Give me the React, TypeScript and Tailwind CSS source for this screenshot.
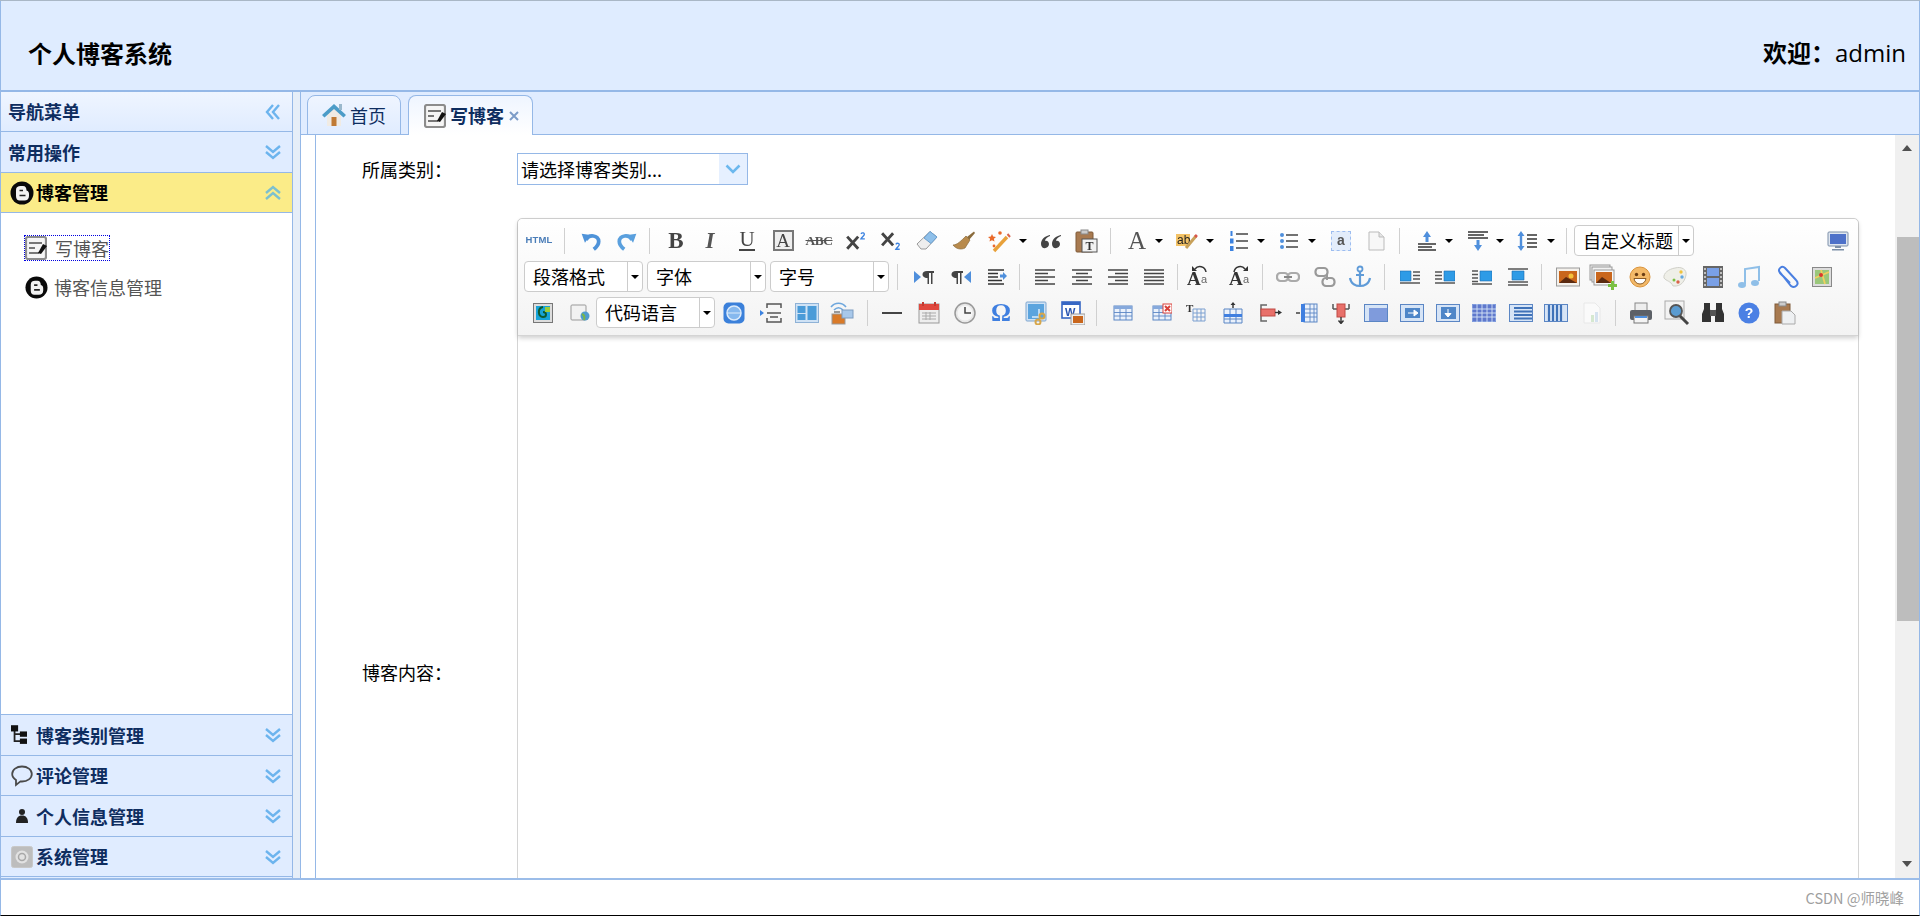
import React from 'react';

const serif = "font-['Liberation_Serif',serif]";

const TableIcon = ({ children, stroke = '#5b86c4' }: { children?: React.ReactNode; stroke?: string }) => (
  <svg viewBox="0 0 20 20" className="h-5 w-5">
    <rect x="1" y="3" width="18" height="14" fill="#eaf1fb" stroke={stroke} />
    <rect x="1" y="3" width="18" height="3" fill="#86a9dc" />
    <path d="M1 9.500H19M1 13H19M7 6V17M13 6V17" stroke={stroke} strokeWidth="0.9" fill="none" />
    {children}
  </svg>
);

const Lines = ({ d }: { d: string }) => (
  <svg viewBox="0 0 20 20" className="h-5 w-5">
    <path d={d} stroke="#444" strokeWidth="1.5" fill="none" />
  </svg>
);

const ImgLines = ({ d, box }: { d: string; box: string }) => (
  <svg viewBox="0 0 20 20" className="h-5 w-5">
    <path d={d} stroke="#555" strokeWidth="1.3" fill="none" />
    <path d={box} fill="#2e9be6" stroke="#1c6cb0" strokeWidth="0.6" />
  </svg>
);

const icons: Record<string, React.ReactNode> = {
  html: <span className="font-['Liberation_Sans',sans-serif] text-[9.5px] font-bold tracking-[0.2px] text-[#4a7db8]">HTML</span>,
  undo: (
    <svg viewBox="0 0 20 20" className="h-[22px] w-[22px]">
      <path d="M5.500 9C8 3.500 17 4.500 17 10.500C17 14 14.500 16 12.500 17.500" stroke="#4f93d9" strokeWidth="3.400" fill="none" />
      <path d="M1.500 3.500L9.500 4.500L4.500 11.500Z" fill="#4f93d9" />
    </svg>
  ),
  redo: (
    <svg viewBox="0 0 20 20" className="h-[22px] w-[22px]">
      <path d="M14.500 9C12 3.500 3 4.500 3 10.500C3 14 5.500 16 7.500 17.500" stroke="#5aa0de" strokeWidth="3.400" fill="none" />
      <path d="M18.500 3.500L10.500 4.500L15.500 11.500Z" fill="#5aa0de" />
    </svg>
  ),
  b: <span className={`${serif} text-[23px] leading-none font-bold text-[#444]`}>B</span>,
  i: <span className={`${serif} text-[23px] leading-none font-bold text-[#555] italic`}>I</span>,
  u: <span className={`${serif} border-b-2 border-[#444] text-[21px] leading-[19px] text-[#444]`}>U</span>,
  abox: <span className={`${serif} flex h-[21px] w-[21px] items-center justify-center border-2 border-[#777] bg-[#eee] text-[19px] leading-none text-[#444]`}>A</span>,
  abc: <span className={`${serif} text-[13.5px] leading-none font-bold tracking-[-0.5px] text-[#555] line-through`}>ABC</span>,
  sup: (
    <svg viewBox="0 0 20 20" className="h-[22px] w-[22px]">
      <path d="M2 6L12 17M12 6L2 17" stroke="#444" strokeWidth="2.600" />
      <path d="M14.500 3.500c1-1.600 3.500-1 3 .8-.3 1-2 2-3 3.700h3.500" stroke="#3b82e0" strokeWidth="1.200" fill="none" />
    </svg>
  ),
  sub: (
    <svg viewBox="0 0 20 20" className="h-[22px] w-[22px]">
      <path d="M1 3L11 14M11 3L1 14" stroke="#444" strokeWidth="2.600" />
      <path d="M13.500 13c1-1.600 3.500-1 3 .8-.3 1-2 2-3 3.700h3.500" stroke="#3b82e0" strokeWidth="1.200" fill="none" />
    </svg>
  ),
  eraser: (
    <svg viewBox="0 0 24 24" className="h-6 w-6">
      <path d="M15 2.500L22 8L11 20H6L2 15Z" fill="#eee" stroke="#999" />
      <path d="M15 2.500L22 8L16 14.500L9 9Z" fill="#8fc0ea" stroke="#6a9fd0" />
    </svg>
  ),
  brush: (
    <svg viewBox="0 0 24 24" className="h-6 w-6">
      <path d="M15 8L22 2.500L23 4L17 11Z" fill="#8a6b3c" />
      <path d="M14 7L18 11L13 19C9 21 4 20 1 16C5 16 9 12 14 7Z" fill="#b88a4c" stroke="#8a6b3c" strokeWidth="0.7" />
    </svg>
  ),
  wand: (
    <svg viewBox="0 0 24 24" className="h-6 w-6">
      <path d="M7 22L20 8" stroke="#e8a13a" strokeWidth="3.400" />
      <path d="M20.500 5L23 8" stroke="#d9634a" strokeWidth="2" />
      <path d="M5 5l1.200 2.600 2.800.3-2.100 1.900.6 2.800L5 11.200 2.500 12.600l.6-2.800L1 7.900l2.800-.3Z" fill="#ea6a2b" />
      <circle cx="13" cy="4" r="1.800" fill="#ea6a2b" />
      <circle cx="7" cy="17" r="1.400" fill="#ea6a2b" />
    </svg>
  ),
  quote: (
    <svg viewBox="0 0 24 24" className="h-6 w-6">
      <path d="M11 6C6 7 2 10 2 15c0 6 8 5 8 0 0-3-3-4-4-3 0-2 2-4 5-5Z" fill="#444" />
      <path d="M22 6c-5 1-9 4-9 9 0 6 8 5 8 0 0-3-3-4-4-3 0-2 2-4 5-5Z" fill="#444" />
    </svg>
  ),
  pasteT: (
    <svg viewBox="0 0 24 24" className="h-6 w-6">
      <rect x="2" y="3" width="17" height="20" rx="1" fill="#a87a50" stroke="#7f5a38" />
      <rect x="7" y="1" width="7" height="4" fill="#ccc" stroke="#888" />
      <rect x="8" y="10" width="15" height="13" fill="#f2f2f2" stroke="#555" />
      <text x="15.500" y="21" textAnchor="middle" fontSize="12" fontWeight="700" fontFamily="Liberation Serif" fill="#333">T</text>
    </svg>
  ),
  fontA: <span className={`${serif} text-[25px] leading-none text-[#555]`}>A</span>,
  ab: (
    <svg viewBox="0 0 22 20" className="h-5 w-[24px]">
      <rect x="0" y="3" width="14" height="12" fill="#f3c266" />
      <text x="1" y="13" fontSize="12" fontFamily="Liberation Sans" fill="#222">ab</text>
      <path d="M10 17L20 5" stroke="#c8a15a" strokeWidth="3" />
      <path d="M19 4l2 2" stroke="#d9534a" strokeWidth="2.500" />
    </svg>
  ),
  ol: (
    <svg viewBox="0 0 20 22" className="h-[22px] w-5">
      <path d="M7 4H19M7 11H19M7 18H19" stroke="#444" strokeWidth="1.400" />
      <rect x="1.500" y="1" width="2" height="5" fill="#3b82e0" />
      <rect x="1" y="8.500" width="3.500" height="5" fill="#3b82e0" />
      <rect x="1" y="16" width="3.500" height="5" fill="#3b82e0" />
    </svg>
  ),
  ul: (
    <svg viewBox="0 0 20 20" className="h-5 w-5">
      <path d="M7 4H19M7 10H19M7 16H19" stroke="#444" strokeWidth="1.400" />
      <circle cx="3" cy="4" r="2" fill="#4f8fdc" />
      <circle cx="3" cy="10" r="2" fill="#4f8fdc" />
      <circle cx="3" cy="16" r="2" fill="#4f8fdc" />
    </svg>
  ),
  selA: (
    <span className="flex h-5 w-5 items-center justify-center border border-dashed border-[#9dbdf0] bg-[#e3edfb] font-['Liberation_Sans',sans-serif] text-[14px] font-bold text-[#555]">a</span>
  ),
  page: (
    <svg viewBox="0 0 20 20" className="h-5 w-5">
      <path d="M3 1H13L18 6V19H3Z" fill="#f7f7f7" stroke="#bbb" />
      <path d="M13 1V6H18" fill="#e5e5e5" stroke="#bbb" />
    </svg>
  ),
  rowBefore: (
    <svg viewBox="0 0 22 22" className="h-[22px] w-[22px]">
      <path d="M11 1L15 7H12.500V12H9.500V7H7Z" fill="#4f8fdc" />
      <path d="M2 14H20M2 17H16M2 20H20" stroke="#333" strokeWidth="1.600" />
    </svg>
  ),
  rowAfter: (
    <svg viewBox="0 0 22 22" className="h-[22px] w-[22px]">
      <path d="M1 2H21M1 5H17M1 8H21" stroke="#333" strokeWidth="1.500" />
      <path d="M11 21L15 15H12.500V10H9.500V15H7Z" fill="#4f8fdc" />
    </svg>
  ),
  lineH: (
    <svg viewBox="0 0 22 22" className="h-[22px] w-[22px]">
      <path d="M5 1L8.500 6H6.200V16H8.500L5 21L1.500 16H3.800V6H1.500Z" fill="#4f8fdc" />
      <path d="M11 5H21M11 9H21M11 13H21M11 17H21" stroke="#333" strokeWidth="1.500" />
    </svg>
  ),
  monitor: (
    <svg viewBox="0 0 22 20" className="h-5 w-[22px]">
      <rect x="1" y="1" width="20" height="14" rx="1" fill="#dfe6f0" stroke="#7d8fa8" />
      <rect x="3" y="3" width="16" height="10" fill="#4e71c9" />
      <path d="M8 15H14V17H8ZM5 18H17V19.500H5Z" fill="#7d8fa8" />
    </svg>
  ),
  ltr: (
    <svg viewBox="0 0 22 20" className="h-5 w-[22px]">
      <path d="M1 4L8 10L1 16Z" fill="#4f8fdc" />
      <path d="M14 4H21V6H19.500V17H18V6H16V17H14.500V11C11 11 9.500 9 9.500 7.500C9.500 5.500 11 4 14 4Z" fill="#444" />
    </svg>
  ),
  rtl: (
    <svg viewBox="0 0 22 20" className="h-5 w-[22px]">
      <path d="M21 4L14 10L21 16Z" fill="#4f8fdc" />
      <path d="M6 4H13V6H11.500V17H10V6H8V17H6.500V11C3 11 1.500 9 1.500 7.500C1.500 5.500 3 4 6 4Z" fill="#444" />
    </svg>
  ),
  indent: (
    <svg viewBox="0 0 20 20" className="h-5 w-5">
      <path d="M1 3H17M1 6.500H11M1 10H11M1 13.500H15M1 17H17" stroke="#333" strokeWidth="1.500" />
      <path d="M13 7.500H16V5L20 9L16 13V10.500H13Z" fill="#4f8fdc" />
    </svg>
  ),
  alignL: <Lines d="M0 3H20M0 6.500H13M0 10H20M0 13.500H13M0 17H20" />,
  alignC: <Lines d="M0 3H20M4 6.500H16M0 10H20M4 13.500H16M0 17H20" />,
  alignR: <Lines d="M0 3H20M7 6.500H20M0 10H20M7 13.500H20M0 17H20" />,
  alignJ: <Lines d="M0 3H20M0 6.500H20M0 10H20M0 13.500H20M0 17H20" />,
  aUndo: (
    <svg viewBox="0 0 26 27" className="h-[27px] w-[26px]">
      <text x="1" y="22" fontSize="19" fontWeight="700" fontFamily="Liberation Serif" fill="#333">A</text>
      <text x="15" y="20" fontSize="11" fontFamily="Liberation Sans" fill="#666">a</text>
      <path d="M9 6C12 2 19 3 20 9" stroke="#333" strokeWidth="1.500" fill="none" />
      <path d="M6 3L11 8H6Z" fill="#333" />
    </svg>
  ),
  aRedo: (
    <svg viewBox="0 0 26 27" className="h-[27px] w-[26px]">
      <text x="1" y="22" fontSize="19" fontWeight="700" fontFamily="Liberation Serif" fill="#333">A</text>
      <text x="15" y="20" fontSize="11" fontFamily="Liberation Sans" fill="#666">a</text>
      <path d="M6 9C7 3 14 2 17 6" stroke="#333" strokeWidth="1.500" fill="none" />
      <path d="M20 3L15 8H20Z" fill="#333" />
    </svg>
  ),
  link: (
    <svg viewBox="0 0 24 20" className="h-5 w-6">
      <rect x="1" y="6" width="11" height="8" rx="3.500" fill="none" stroke="#aaa" strokeWidth="2.200" />
      <rect x="12" y="6" width="11" height="8" rx="3.500" fill="none" stroke="#aaa" strokeWidth="2.200" />
      <path d="M8 10H16" stroke="#888" strokeWidth="2" />
    </svg>
  ),
  unlink: (
    <svg viewBox="0 0 22 22" className="h-[22px] w-[22px]">
      <rect x="1.500" y="2" width="12" height="8" rx="3.500" fill="none" stroke="#999" strokeWidth="2.200" />
      <rect x="8.500" y="12" width="12" height="8" rx="3.500" fill="none" stroke="#999" strokeWidth="2.200" />
      <path d="M13 8V14" stroke="#999" strokeWidth="2" />
    </svg>
  ),
  anchor: (
    <svg viewBox="0 0 24 24" className="h-6 w-6">
      <circle cx="12" cy="4" r="2.500" fill="none" stroke="#5f9bd8" strokeWidth="1.800" />
      <path d="M12 6.500V21M8 10H16M2 13C3 19 8 21 12 21C16 21 21 19 22 13" stroke="#5f9bd8" strokeWidth="2.200" fill="none" />
    </svg>
  ),
  imgL: <ImgLines box="M0 4H11V14H0Z" d="M13 5H20M13 8.500H20M13 12H20M0 16H20" />,
  imgR: <ImgLines box="M9 4H20V14H9Z" d="M0 5H7M0 8.500H7M0 12H7M0 16H20" />,
  imgN: <ImgLines box="M8 4H20V14H8Z" d="M0 4H6M0 7.500H6M0 11H6M0 14.500H6M0 17H20" />,
  imgC: <ImgLines box="M4 4H16V13H4Z" d="M0 2H20M0 15H20M0 18H20" />,
  image: (
    <svg viewBox="0 0 24 20" className="h-5 w-6">
      <rect x="0.500" y="1" width="23" height="18" fill="#f4f1ec" stroke="#999" />
      <rect x="3" y="4" width="18" height="12" fill="#c9661c" />
      <circle cx="15" cy="9" r="2.500" fill="#f5c23c" />
      <path d="M3 16L10 10L21 16Z" fill="#5a2a10" />
    </svg>
  ),
  multi: (
    <svg viewBox="0 0 28 26" className="h-[26px] w-7">
      <rect x="1" y="1" width="20" height="15" fill="#eee" stroke="#999" />
      <rect x="3" y="3" width="20" height="15" fill="#f2f2f2" stroke="#999" />
      <rect x="5" y="6" width="20" height="15" fill="#f7f7f7" stroke="#999" />
      <rect x="7" y="8" width="16" height="11" fill="#c9661c" />
      <path d="M7 19L13 13L22 19Z" fill="#5a2a10" />
      <path d="M19 20H22V17H25V20H28V23H25V26H22V23H19Z" fill="#7bc043" />
    </svg>
  ),
  emoji: (
    <svg viewBox="0 0 22 22" className="h-[22px] w-[22px]">
      <circle cx="11" cy="11" r="10" fill="#f3b968" stroke="#d9933c" />
      <circle cx="7.500" cy="8.500" r="1.700" fill="#6b3d14" />
      <circle cx="14.500" cy="8.500" r="1.700" fill="#6b3d14" />
      <path d="M5 12.500H17C16.500 16 14 18 11 18C8 18 5.500 16 5 12.500Z" fill="#fff" stroke="#8a5a24" />
    </svg>
  ),
  palette: (
    <svg viewBox="0 0 24 22" className="h-[22px] w-6">
      <path d="M12 2C19 0 24 4 23 9C22 14 19 21 10 20C8 15 3 15 1 12C0 7 6 3 12 2Z" fill="#efefe8" stroke="#cfcfc8" />
      <circle cx="18" cy="6" r="1.700" fill="#f0c33c" />
      <circle cx="19" cy="11" r="1.700" fill="#63a8e0" />
      <circle cx="15" cy="16" r="1.700" fill="#d9634a" />
      <circle cx="11" cy="14" r="1.500" fill="#7bc043" />
    </svg>
  ),
  film: (
    <svg viewBox="0 0 20 24" className="h-6 w-5">
      <rect x="0" y="1" width="20" height="22" fill="#666" />
      <rect x="4" y="3" width="12" height="8" fill="#7aa0e6" />
      <rect x="4" y="13" width="12" height="8" fill="#7aa0e6" />
      <path d="M2 3V21M18 3V21" stroke="#ddd" strokeWidth="1.500" strokeDasharray="2 2" />
    </svg>
  ),
  music: (
    <svg viewBox="0 0 24 24" className="h-6 w-6">
      <path d="M8 19V4L22 2V16" stroke="#8fbfe8" strokeWidth="2" fill="none" />
      <ellipse cx="5" cy="20" rx="4" ry="3" fill="#8fbfe8" />
      <ellipse cx="18" cy="18" rx="4" ry="3" fill="#8fbfe8" />
    </svg>
  ),
  clip: (
    <svg viewBox="0 0 24 24" className="h-6 w-6">
      <path d="M4 6L16 21C20 24 25 19 21 15L10 3C7 0 2 4 5 8L15 18" stroke="#4a7fe0" strokeWidth="2" fill="none" />
    </svg>
  ),
  map: (
    <svg viewBox="0 0 20 20" className="h-5 w-5">
      <rect x="0.500" y="0.500" width="19" height="19" fill="#ddd" stroke="#888" />
      <rect x="3" y="3" width="14" height="14" fill="#9ac77a" />
      <path d="M3 11L17 5M9 3L13 17" stroke="#f0d060" strokeWidth="1.800" />
      <circle cx="9" cy="8" r="2" fill="#d83a2e" />
    </svg>
  ),
  tpl: (
    <svg viewBox="0 0 20 20" className="h-5 w-5">
      <rect x="0.500" y="0.500" width="19" height="19" fill="#ddd" stroke="#777" />
      <rect x="3" y="3" width="14" height="14" fill="#16a3d8" />
      <path d="M10 4C4 5 5 14 10 14C14 14 14 9 10 9" stroke="#0d5a2e" strokeWidth="2" fill="none" />
      <rect x="12" y="4" width="5" height="5" fill="#9acb3c" />
    </svg>
  ),
  webpage: (
    <svg viewBox="0 0 20 20" className="h-5 w-5">
      <rect x="1" y="2" width="15" height="15" rx="1" fill="#f2f2f2" stroke="#999" />
      <circle cx="15" cy="13" r="4.500" fill="#4f9bcf" />
      <path d="M12 11C14 12 15 14 14 17" stroke="#7ab648" strokeWidth="2" fill="none" />
    </svg>
  ),
  safari: (
    <svg viewBox="0 0 22 22" className="h-[22px] w-[22px]">
      <rect x="0.500" y="0.500" width="21" height="21" rx="5" fill="#3b80da" />
      <circle cx="11" cy="11" r="7" fill="#86b8ee" stroke="#dcebfb" strokeWidth="1.500" />
      <path d="M4 11H18" stroke="#dcebfb" strokeWidth="1" />
    </svg>
  ),
  pagebreak: (
    <svg viewBox="0 0 22 22" className="h-[22px] w-[22px]">
      <path d="M0 8L4 11L0 14Z" fill="#3b82e0" />
      <path d="M7 6V2H21V6M7 11H21M7 16V20H21V16M10 15H18" stroke="#555" strokeWidth="1.500" fill="none" />
    </svg>
  ),
  layout: (
    <svg viewBox="0 0 24 20" className="h-5 w-6">
      <rect x="0.500" y="0.500" width="23" height="19" fill="#cfe2f5" stroke="#8fb2d6" />
      <rect x="2.500" y="3" width="8" height="7" fill="#4a9bd8" />
      <rect x="2.500" y="11" width="8" height="6" fill="#4a9bd8" />
      <rect x="12.500" y="3" width="9" height="14" fill="#4a9bd8" />
    </svg>
  ),
  wifi: (
    <svg viewBox="0 0 24 24" className="h-6 w-6">
      <path d="M1 6C5 1 12 1 16 6M4 9C7 6 10 6 13 9" stroke="#6ea7dd" strokeWidth="1.600" fill="none" />
      <rect x="2" y="13" width="13" height="10" fill="#d97a28" stroke="#999" />
      <rect x="12" y="9" width="11" height="8" fill="#a8c8ea" stroke="#7c9cc0" />
      <path d="M4 11H10" stroke="#999" strokeWidth="2" />
    </svg>
  ),
  hr: <span className="h-[2px] w-5 bg-[#444]" />,
  calendar: (
    <svg viewBox="0 0 22 22" className="h-[22px] w-[22px]">
      <rect x="1" y="2" width="20" height="19" fill="#eee" stroke="#999" />
      <rect x="1" y="2" width="20" height="6" fill="#e0483e" />
      <path d="M5 0V4M17 0V4" stroke="#c23a30" strokeWidth="2" />
      <path d="M4 11H18M4 14H18M4 17H18M8 10V18M12 10V18" stroke="#aaa" strokeWidth="1" />
    </svg>
  ),
  clock: (
    <svg viewBox="0 0 22 22" className="h-[22px] w-[22px]">
      <circle cx="11" cy="11" r="10" fill="#e8e8e8" stroke="#999" strokeWidth="1.500" />
      <circle cx="11" cy="11" r="7.500" fill="#f7f7f7" />
      <path d="M11 5V11H17" stroke="#444" strokeWidth="1.500" fill="none" />
    </svg>
  ),
  omega: <span className={`${serif} text-[25px] leading-none font-bold text-[#3f7fe0]`}>Ω</span>,
  scissor: (
    <svg viewBox="0 0 24 24" className="h-6 w-6">
      <rect x="1" y="1" width="20" height="19" rx="1" fill="#cfe2f5" stroke="#7fa6cf" />
      <rect x="3" y="3" width="16" height="15" fill="#5ba4de" />
      <path d="M7 16H14V8" stroke="#dcebfb" strokeWidth="1.500" fill="none" />
      <circle cx="17" cy="15" r="2.500" fill="none" stroke="#d6a64a" strokeWidth="2" />
      <circle cx="13" cy="21" r="2.500" fill="none" stroke="#d6a64a" strokeWidth="2" />
    </svg>
  ),
  word: (
    <svg viewBox="0 0 24 24" className="h-6 w-6">
      <rect x="1" y="1" width="18" height="16" fill="#fff" stroke="#3767c4" strokeWidth="1.600" />
      <rect x="1" y="1" width="18" height="3" fill="#3767c4" />
      <text x="4" y="15" fontSize="11" fontWeight="700" fontFamily="Liberation Sans" fill="#2a55b0">W</text>
      <rect x="10" y="13" width="14" height="11" fill="#eee" stroke="#999" />
      <rect x="12" y="15" width="10" height="7" fill="#c9661c" />
    </svg>
  ),
  table: <TableIcon />,
  tableDel: (
    <TableIcon>
      <rect x="11" y="1" width="9" height="9" fill="#fff" stroke="#d9403a" />
      <path d="M13 3L18 8M18 3L13 8" stroke="#d9403a" strokeWidth="2" />
    </TableIcon>
  ),
  tableT: (
    <svg viewBox="0 0 20 20" className="h-5 w-5">
      <text x="0" y="9" fontSize="11" fontWeight="700" fontFamily="Liberation Serif" fill="#333">T</text>
      <path d="M7 6H19V18H7ZM7 10H19M7 14H19M11 6V18M15 6V18" stroke="#7a9fd0" strokeWidth="1" fill="none" />
    </svg>
  ),
  insRow: (
    <svg viewBox="0 0 20 22" className="h-[22px] w-5">
      <path d="M10 0L12.500 3H10.700V6H9.300V3H7.500Z" fill="#333" />
      <path d="M1 7H19V21H1ZM7 7V21M13 7V21M1 17H19" stroke="#5b86c4" fill="#eaf1fb" />
      <rect x="1" y="12" width="18" height="3" fill="#3f7fe0" />
    </svg>
  ),
  delCol: (
    <svg viewBox="0 0 22 20" className="h-5 w-[22px]">
      <path d="M7 2H1V18H7" stroke="#666" strokeWidth="1.500" fill="none" />
      <rect x="1" y="6" width="14" height="7" fill="#e8706a" stroke="#c04a44" />
      <path d="M15 9.500H20" stroke="#333" strokeWidth="1.400" />
      <path d="M22 9.500L18 7V12Z" fill="#333" />
    </svg>
  ),
  insCol: (
    <svg viewBox="0 0 22 20" className="h-5 w-[22px]">
      <path d="M0 10H4" stroke="#333" strokeWidth="1.400" />
      <rect x="8" y="1" width="13" height="18" fill="#eaf1fb" stroke="#5b86c4" />
      <path d="M14 1V19M18 1V19M8 6H21M8 10H21M8 14H21" stroke="#5b86c4" strokeWidth="0.900" />
      <rect x="5" y="1" width="4" height="18" fill="#3f7fe0" />
    </svg>
  ),
  delRow: (
    <svg viewBox="0 0 20 22" className="h-[22px] w-5">
      <path d="M2 7V2M18 7V2M2 7H18" stroke="#555" strokeWidth="1.500" fill="none" />
      <rect x="6" y="2" width="8" height="13" fill="#e8706a" stroke="#c04a44" />
      <path d="M10 15V21M7.500 18.500L10 21.500L12.500 18.500" stroke="#333" strokeWidth="1.400" fill="none" />
    </svg>
  ),
  merge: (
    <svg viewBox="0 0 24 20" className="h-5 w-6">
      <rect x="0.500" y="1.500" width="23" height="17" fill="#d6e4f6" stroke="#5b86c4" />
      <rect x="5" y="5" width="18" height="13" fill="#7f9bdc" />
    </svg>
  ),
  mergeR: (
    <svg viewBox="0 0 24 20" className="h-5 w-6">
      <rect x="0.500" y="1.500" width="23" height="17" fill="#d6e4f6" stroke="#5b86c4" />
      <rect x="5" y="5" width="15" height="10" fill="#4f86c8" />
      <path d="M8 10H14M14 7L18 10L14 13Z" stroke="#fff" fill="#fff" />
    </svg>
  ),
  mergeD: (
    <svg viewBox="0 0 24 20" className="h-5 w-6">
      <rect x="0.500" y="1.500" width="23" height="17" fill="#d6e4f6" stroke="#5b86c4" />
      <rect x="5" y="4" width="15" height="12" fill="#4f86c8" />
      <path d="M12 6V11M9 10.500L12 14L15 10.500Z" stroke="#fff" fill="#fff" />
    </svg>
  ),
  grid: (
    <svg viewBox="0 0 24 20" className="h-5 w-6">
      <rect x="0.500" y="1.500" width="23" height="17" fill="#5f78cc" stroke="#7f9bdc" />
      <path d="M0 6H24M0 10H24M0 14H24M5 1V19M10 1V19M15 1V19M20 1V19" stroke="#d6e4f6" strokeWidth="0.900" />
    </svg>
  ),
  rows: (
    <svg viewBox="0 0 24 20" className="h-5 w-6">
      <rect x="0.500" y="1.500" width="23" height="17" fill="#d6e4f6" stroke="#5b86c4" />
      <path d="M5 5H23M5 8.500H23M5 12H23M5 15.500H23" stroke="#3f72b8" strokeWidth="2" />
    </svg>
  ),
  cols: (
    <svg viewBox="0 0 24 20" className="h-5 w-6">
      <rect x="0.500" y="1.500" width="23" height="17" fill="#d6e4f6" stroke="#5b86c4" />
      <path d="M5 2V18M9 2V18M13 2V18M17 2V18" stroke="#3f72b8" strokeWidth="2.200" />
    </svg>
  ),
  disabled: (
    <svg viewBox="0 0 20 22" className="h-[22px] w-5">
      <path d="M2 1H13L18 6V21H2Z" fill="#fafafa" stroke="#e8e8e8" />
      <rect x="9" y="13" width="3" height="7" fill="#d5e8d0" />
      <rect x="13" y="10" width="3" height="10" fill="#d5e2ef" />
    </svg>
  ),
  print: (
    <svg viewBox="0 0 24 24" className="h-6 w-6">
      <rect x="6" y="2" width="12" height="8" fill="#eee" stroke="#888" />
      <rect x="1" y="9" width="22" height="10" rx="2" fill="#5c6066" />
      <rect x="5" y="15" width="14" height="7" fill="#f4f4f4" stroke="#777" />
      <rect x="6" y="15" width="12" height="2" fill="#4f8fdc" />
    </svg>
  ),
  search: (
    <svg viewBox="0 0 26 26" className="h-[26px] w-[26px]">
      <rect x="1" y="1" width="19" height="18" fill="#f2f2f2" stroke="#aaa" />
      <circle cx="12" cy="11" r="6" fill="#5a9bd0" stroke="#555" strokeWidth="1.800" />
      <path d="M16 16L24 24" stroke="#444" strokeWidth="3" />
    </svg>
  ),
  binoc: (
    <svg viewBox="0 0 24 24" className="h-6 w-6">
      <path d="M3 2H9V8L10 13V21H1V13L3 8ZM15 2H21V8L23 13V21H14V13L15 8Z" fill="#333" />
      <rect x="9" y="9" width="6" height="6" fill="#555" />
    </svg>
  ),
  help: (
    <svg viewBox="0 0 22 22" className="h-[22px] w-[22px]">
      <circle cx="11" cy="11" r="10.500" fill="#4b80e4" />
      <text x="11" y="16" textAnchor="middle" fontSize="14" fontWeight="700" fontFamily="Liberation Sans" fill="#fff">?</text>
    </svg>
  ),
  pasteDoc: (
    <svg viewBox="0 0 22 24" className="h-6 w-[22px]">
      <rect x="1" y="3" width="15" height="19" fill="#a87a50" stroke="#7f5a38" />
      <rect x="5" y="1" width="7" height="4" fill="#ccc" stroke="#888" />
      <path d="M8 10H17L21 14V23H8Z" fill="#eef0f2" stroke="#aaa" />
    </svg>
  ),
};

const T = ({ n, c = 'ml-[16px]' }: { n: string; c?: string }) => (
  <span className={`flex h-[31px] w-5 shrink-0 items-center justify-center blur-[0.3px] [&>*]:shrink-0 ${c}`}>{icons[n]}</span>
);

const Arrow = ({ c = 'ml-[8px]' }: { c?: string }) => (
  <span className={`flex h-[31px] w-2 shrink-0 items-center justify-center ${c}`}>
    <span className="h-0 w-0 border-x-4 border-t-4 border-x-transparent border-t-black" />
  </span>
);

const Sep = ({ c }: { c: string }) => <span className={`h-[26px] w-px shrink-0 bg-[#d0d0d0] ${c}`} />;

const Sel = ({ label, c = 'w-[119px]' }: { label: string; c?: string }) => (
  <span className={`flex h-[31px] shrink-0 rounded-[4px] border border-[#cccccc] bg-white text-[18px] leading-[29px] text-black ${c}`}>
    <span className="flex-1 pl-[8px]">{label}</span>
    <span className="flex w-[15px] items-center justify-center border-l border-[#cccccc]">
      <span className="h-0 w-0 border-x-4 border-t-4 border-x-transparent border-t-black" />
    </span>
  </span>
);

const Toolbar = () => (
  <div className="flex flex-col gap-[5px] rounded-t-[5px] border-b border-[#d4d4d4] bg-gradient-to-b from-white to-[#f3f3f3] pt-[6px] pr-[10px] pb-[7px] pl-[6px] shadow-[0_2px_5px_rgba(0,0,0,0.2)]">
    <div className="flex h-[31px] items-center">
      <span className="ml-[2px] flex h-[31px] w-[26px] shrink-0 items-center justify-center blur-[0.3px]">{icons.html}</span>
      <Sep c="ml-[12px]" />
      <T n="undo" />
      <T n="redo" />
      <Sep c="ml-[12px]" />
      <T n="b" />
      <T n="i" c="ml-[14px]" />
      <T n="u" c="ml-[17px]" />
      <T n="abox" />
      <T n="abc" />
      <T n="sup" c="ml-[17px]" />
      <T n="sub" />
      <T n="eraser" c="ml-[15px]" />
      <T n="brush" c="ml-[17px]" />
      <T n="wand" c="ml-[15px]" />
      <Arrow c="ml-[10px]" />
      <T n="quote" c="ml-[14px]" />
      <T n="pasteT" c="ml-[15px]" />
      <Sep c="ml-[14px]" />
      <T n="fontA" />
      <Arrow />
      <T n="ab" c="ml-[14px]" />
      <Arrow c="ml-[9px]" />
      <T n="ol" c="ml-[15px]" />
      <Arrow />
      <T n="ul" c="ml-[14px]" />
      <Arrow c="ml-[9px]" />
      <T n="selA" c="ml-[15px]" />
      <T n="page" c="ml-[15px]" />
      <Sep c="ml-[13px]" />
      <T n="rowBefore" c="ml-[17px]" />
      <Arrow />
      <T n="rowAfter" c="ml-[15px]" />
      <Arrow />
      <T n="lineH" c="ml-[13px]" />
      <Arrow c="ml-[10px]" />
      <Sep c="ml-[11px]" />
      <Sel label="自定义标题" c="ml-[7px] w-[120px]" />
      <T n="monitor" c="ml-auto" />
    </div>
    <div className="flex h-[31px] items-center">
      <Sel label="段落格式" />
      <Sel label="字体" c="ml-[4px] w-[119px]" />
      <Sel label="字号" c="ml-[4px] w-[119px]" />
      <Sep c="ml-[8px]" />
      <T n="ltr" />
      <T n="rtl" c="ml-[17px]" />
      <T n="indent" />
      <Sep c="ml-[12px]" />
      <T n="alignL" c="ml-[15px]" />
      <T n="alignC" c="ml-[17px]" />
      <T n="alignR" />
      <T n="alignJ" />
      <Sep c="ml-[13px]" />
      <T n="aUndo" c="ml-[11px]" />
      <T n="aRedo" c="ml-[22px]" />
      <Sep c="ml-[11px]" />
      <T n="link" c="ml-[15px]" />
      <T n="unlink" c="ml-[17px]" />
      <T n="anchor" c="ml-[15px]" />
      <Sep c="ml-[14px]" />
      <T n="imgL" c="ml-[15px]" />
      <T n="imgR" c="ml-[15px]" />
      <T n="imgN" c="ml-[17px]" />
      <T n="imgC" />
      <Sep c="ml-[13px]" />
      <T n="image" />
      <T n="multi" c="ml-[15px]" />
      <T n="emoji" c="ml-[17px]" />
      <T n="palette" c="ml-[15px]" />
      <T n="film" c="ml-[18px]" />
      <T n="music" />
      <T n="clip" c="ml-[18px]" />
      <T n="map" c="ml-[15px]" />
    </div>
    <div className="flex h-[31px] items-center">
      <T n="tpl" c="ml-[9px]" />
      <T n="webpage" c="ml-[17px]" />
      <Sel label="代码语言" c="ml-[6px] w-[119px]" />
      <T n="safari" c="ml-[9px]" />
      <T n="pagebreak" c="ml-[17px]" />
      <T n="layout" />
      <T n="wifi" c="ml-[15px]" />
      <Sep c="ml-[15px]" />
      <T n="hr" c="ml-[14px]" />
      <T n="calendar" c="ml-[17px]" />
      <T n="clock" />
      <T n="omega" />
      <T n="scissor" />
      <T n="word" />
      <Sep c="ml-[13px]" />
      <T n="table" />
      <T n="tableDel" c="ml-[19px]" />
      <T n="tableT" c="ml-[14px]" />
      <T n="insRow" c="ml-[17px]" />
      <T n="delCol" c="ml-[18px]" />
      <T n="insCol" />
      <T n="delRow" c="ml-[14px]" />
      <T n="merge" c="ml-[15px]" />
      <T n="mergeR" />
      <T n="mergeD" />
      <T n="grid" />
      <T n="rows" c="ml-[17px]" />
      <T n="cols" c="ml-[15px]" />
      <T n="disabled" />
      <Sep c="ml-[13px]" />
      <T n="print" c="ml-[15px]" />
      <T n="search" />
      <T n="binoc" />
      <T n="help" />
      <T n="pasteDoc" />
    </div>
  </div>
);

const Chevrons = ({ dir = 'down', color = '#6cb4ee' }: { dir?: 'down' | 'up' | 'left'; color?: string }) => {
  const d = {
    down: 'M1 2L8 8L15 2M1 8L8 14L15 8',
    up: 'M1 8L8 2L15 8M1 14L8 8L15 14',
    left: 'M8 1L2 8L8 15M14 1L8 8L14 15',
  }[dir];
  return (
    <svg viewBox="0 0 16 16" className="h-4 w-4 shrink-0">
      <path d={d} fill="none" stroke={color} strokeWidth="2.400" />
    </svg>
  );
};

const BloggerIcon = ({ c = 'h-6 w-6' }: { c?: string }) => (
  <svg viewBox="0 0 24 24" className={`shrink-0 blur-[0.3px] ${c}`}>
    <circle cx="12" cy="12" r="11.500" fill="#0a0a0a" />
    <path d="M6 9C6 6 8 5 10.500 5H13C15.500 5 16.500 7 16.500 9.500C18.500 10 19 11.500 19 13V15C19 18 17 19.500 14.500 19.500H9.500C7.500 19.500 6 18 6 15Z" fill="#f2f2f2" />
    <path d="M9.500 9.500H13M9.500 14.500H15.500" stroke="#222" strokeWidth="1.700" />
  </svg>
);

const WriteIcon = () => (
  <svg viewBox="0 0 22 24" className="h-6 w-[22px] shrink-0 blur-[0.3px]">
    <rect x="1" y="1" width="20" height="22" rx="2" fill="#f5f5f5" stroke="#8c8c8c" strokeWidth="2.200" />
    <path d="M4 7H17M4 12H10M4 17H14" stroke="#777" strokeWidth="1.800" />
    <path d="M13 17L18 8L22 10L16 18Z" fill="#111" />
  </svg>
);

const TreeIcon = () => (
  <svg viewBox="0 0 18 22" className="mr-[6px] h-[22px] w-[16px] shrink-0 blur-[0.3px]">
    <path d="M4 4V18H11M4 10H11" stroke="#222" strokeWidth="2" fill="none" />
    <rect x="0" y="0" width="8" height="7" fill="#111" />
    <rect x="10" y="7" width="8" height="6" fill="#111" />
    <rect x="10" y="15" width="8" height="6" fill="#111" />
  </svg>
);

const BubbleIcon = () => (
  <svg viewBox="0 0 22 22" className="h-[22px] w-[22px] shrink-0 blur-[0.3px]">
    <path d="M11 1.500C5.500 1.500 1.200 4.700 1.200 9C1.200 11.500 2.600 13.500 5 15L5 20L9.500 16.400C10 16.500 10.500 16.500 11 16.500C16.500 16.500 20.800 13.300 20.800 9C20.800 4.700 16.500 1.500 11 1.500Z" fill="none" stroke="#4a4a4a" strokeWidth="1.800" />
  </svg>
);

const PersonIcon = () => (
  <svg viewBox="0 0 14 16" className="h-4 w-[14px] shrink-0 blur-[0.3px]">
    <circle cx="7" cy="4" r="3" fill="#222" />
    <path d="M1 15C1 10 3 7.500 7 7.500C11 7.500 13 10 13 15Z" fill="#222" />
  </svg>
);

const SystemIcon = () => (
  <svg viewBox="0 0 22 22" className="h-[22px] w-[22px] shrink-0 blur-[0.3px]">
    <rect x="0.500" y="0.500" width="21" height="21" rx="2" fill="#bdbdbd" stroke="#c8c8c8" />
    <circle cx="11" cy="11" r="6.500" fill="#e2e2e2" />
    <circle cx="11" cy="11" r="3.500" fill="none" stroke="#a8a8a8" strokeWidth="1.500" />
  </svg>
);

const HomeIcon = () => (
  <svg viewBox="0 0 24 24" className="h-6 w-6 shrink-0 blur-[0.3px]">
    <path d="M5 11L12 5L19 11V23H5Z" fill="#f0ebe4" />
    <rect x="9.500" y="14" width="5" height="9" fill="#c07a34" />
    <path d="M12 1L24 12L21.500 14.500L12 6L2.500 14.500L0 12Z" fill="#4c9cc8" />
    <rect x="17" y="1" width="3" height="6" fill="#9ab8cc" />
  </svg>
);

const Row = ({ icon, title, c, dir, tone, color }: { icon?: React.ReactNode; title: string; c: string; dir?: 'down' | 'up' | 'left'; tone?: string; color?: string }) => (
  <div className={`flex shrink-0 items-center border-b border-[#95b8e7] pr-[11px] text-[18px] font-bold ${c} ${tone ?? 'bg-[#e0ecff] text-[#0e2d5f]'}`}>
    {icon ? <span className="flex w-[33px] shrink-0 items-center justify-center pl-[8px]">{icon}</span> : null}
    <span className={icon ? 'ml-[2px] flex-1' : 'ml-[7px] flex-1'}>{title}</span>
    <Chevrons dir={dir} color={color} />
  </div>
);

export default function App() {
  return (
    <div className="flex h-[916px] w-full flex-col overflow-hidden border-t border-[#a9b7c6] bg-white font-['Noto_Sans_CJK_SC',sans-serif] text-black">
      <header className="flex h-[91px] shrink-0 items-center justify-between border-x border-b-2 border-[#95b8e7] bg-[#dfecff] pt-[14px] pr-[13px] pl-[27px] text-[24px]">
        <span className="font-bold">个人博客系统</span>
        <span>
          <b>{'欢迎\uFF1A'}</b>
          <span className="font-['Open_Sans',sans-serif]">admin</span>
        </span>
      </header>

      <div className="flex min-h-0 flex-1 border-x border-[#95b8e7]">
        <aside className="flex w-[292px] shrink-0 flex-col border-r border-[#95b8e7]">
          <Row title="导航菜单" c="h-[40px]" dir="left" tone="bg-gradient-to-b from-[#eff5ff] to-[#e0ecff] text-[#0e2d5f]" />
          <Row title="常用操作" c="h-[41px]" />
          <Row icon={<BloggerIcon />} title="博客管理" c="h-[40px]" dir="up" tone="bg-[#fbec88] text-black" color="#7cc0cf" />
          <div className="flex flex-1 flex-col border-b border-[#95b8e7] pt-[22px] pl-[23px] text-[18px] text-[#555]">
            <div className="flex h-[26px] w-[86px] items-center border border-dotted border-[#0000e0]">
              <WriteIcon />
              <span className="ml-[8px] whitespace-nowrap">写博客</span>
            </div>
            <div className="mt-[13px] flex h-[26px] items-center pl-px">
              <BloggerIcon c="h-[23px] w-[23px]" />
              <span className="ml-[6px]">博客信息管理</span>
            </div>
          </div>
          <Row icon={<TreeIcon />} title="博客类别管理" c="h-[41px]" />
          <Row icon={<BubbleIcon />} title="评论管理" c="h-[40px]" />
          <Row icon={<PersonIcon />} title="个人信息管理" c="h-[41px]" />
          <Row icon={<SystemIcon />} title="系统管理" c="h-[40px]" />
          <div className="h-px shrink-0 bg-[#e0ecff]" />
        </aside>

        <div className="w-[7px] shrink-0 bg-[#e6eef8]" />

        <main className="flex min-w-0 flex-1 flex-col border-l border-[#95b8e7]">
          <div className="flex h-[43px] shrink-0 items-end gap-[7px] border-b border-[#95b8e7] bg-[#e0ecff] pl-[6px] text-[18px]">
            <div className="-mb-px flex h-[40px] w-[94px] items-center rounded-t-[8px] border border-[#95b8e7] bg-gradient-to-b from-[#eff5ff] to-[#e0ecff] pl-[14px] text-[#0e2d5f]">
              <HomeIcon />
              <span className="ml-[4px]">首页</span>
            </div>
            <div className="-mb-px flex h-[40px] w-[125px] items-center rounded-t-[8px] border border-b-0 border-[#95b8e7] bg-gradient-to-b from-[#eff5ff] to-white pl-[15px] font-bold text-[#0e2d5f]">
              <WriteIcon />
              <span className="ml-[4px]">写博客</span>
              <svg viewBox="0 0 10 10" className="ml-[5px] h-[10px] w-[10px]">
                <path d="M1 1L9 9M9 1L1 9" stroke="#7d9cc8" strokeWidth="2" />
              </svg>
            </div>
          </div>

          <div className="flex min-h-0 flex-1">
            <div className="w-[15px] shrink-0 border-r border-[#95b8e7]" />
            <div className="min-w-0 flex-1 overflow-hidden pt-[18px] text-[18px]">
              <div className="flex items-center">
                <span className="w-[201px] shrink-0 pl-[46px]">{'所属类别\uFF1A'}</span>
                <div className="flex h-[32px] w-[231px] border border-[#95b8e7]">
                  <span className="flex-1 pl-[3px] leading-[30px]">请选择博客类别...</span>
                  <span className="flex w-[28px] items-center justify-center bg-[#e6f0ff]">
                    <svg viewBox="0 0 16 10" className="h-[10px] w-4">
                      <path d="M1.500 1.500L8 8L14.500 1.500" fill="none" stroke="#6cb8ee" strokeWidth="2.500" />
                    </svg>
                  </span>
                </div>
              </div>
              <div className="mt-[33px] flex items-center">
                <span className="w-[201px] shrink-0 pl-[46px]">{'博客内容\uFF1A'}</span>
                <div className="h-[908px] w-[1342px] shrink-0 rounded-t-[5px] border border-[#d4d4d4] bg-white">
                  <Toolbar />
                </div>
              </div>
            </div>
            <div className="flex w-[24px] shrink-0 flex-col bg-[#f0f0f0] pb-px">
              <div className="flex h-[26px] items-center justify-center">
                <span className="h-0 w-0 border-x-[5.5px] border-b-[6px] border-x-transparent border-b-[#505050]" />
              </div>
              <div className="mt-[76px] ml-[2px] h-[384px] bg-[#bdbdbd]" />
              <div className="flex-1" />
              <div className="flex h-[26px] items-center justify-center">
                <span className="h-0 w-0 border-x-[5.5px] border-t-[6px] border-x-transparent border-t-[#505050]" />
              </div>
            </div>
          </div>
        </main>
      </div>

      <footer className="flex h-[38px] shrink-0 items-center justify-end border-x border-t-2 border-b border-x-[#95b8e7] border-t-[#9cbde9] border-b-black bg-white pr-[15px] text-[14.5px] text-[#a0a0a0]">
        CSDN @师晓峰
      </footer>
    </div>
  );
}
